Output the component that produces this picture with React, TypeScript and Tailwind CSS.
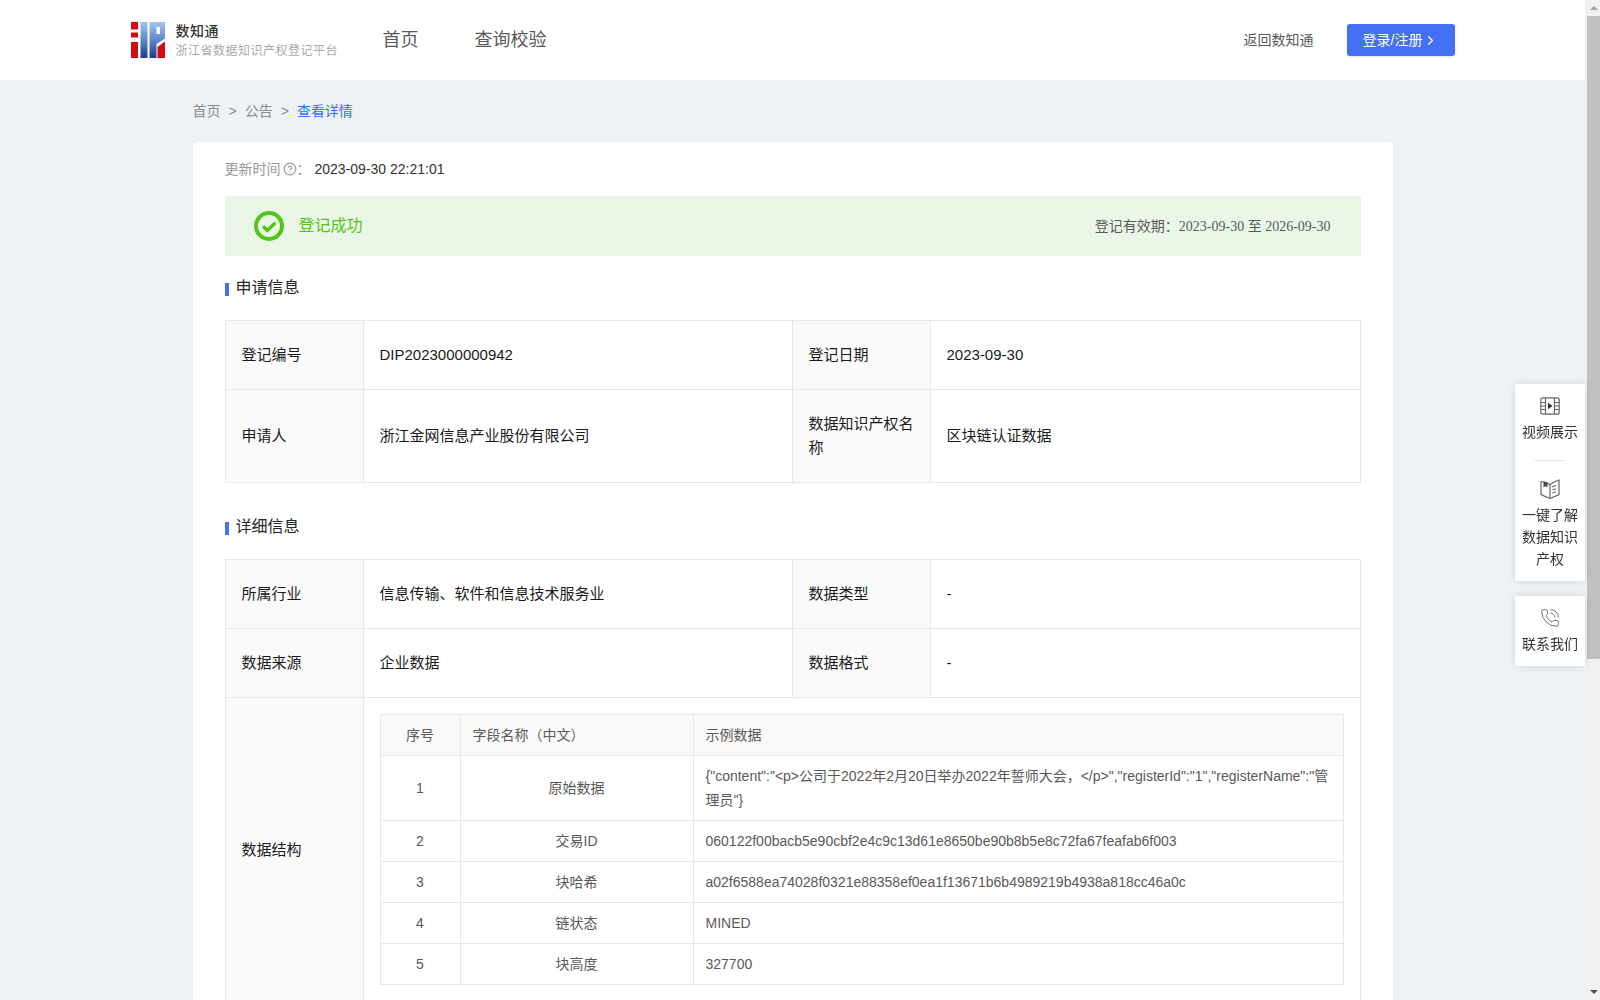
import { ChevronRight, CircleHelp, PhoneCall } from 'lucide-react'

const labelCell = 'border border-[#e8e8e8] bg-[#fafafa] px-4 py-[22px] text-left font-normal align-middle'
const valueCell = 'border border-[#e8e8e8] px-4 py-[22px] text-left align-middle'
const innerHead = 'border border-[#e8e8e8] bg-[#fafafa] px-3 py-2 font-normal'
const innerCell = 'border border-[#e8e8e8] px-3 py-2'

const sampleRows = [
  {
    id: 1,
    name: '原始数据',
    value: '{"content":"<p>公司于2022年2月20日举办2022年誓师大会，</p>","registerId":"1","registerName":"管理员"}',
  },
  { id: 2, name: '交易ID', value: '060122f00bacb5e90cbf2e4c9c13d61e8650be90b8b5e8c72fa67feafab6f003' },
  { id: 3, name: '块哈希', value: 'a02f6588ea74028f0321e88358ef0ea1f13671b6b4989219b4938a818cc46a0c' },
  { id: 4, name: '链状态', value: 'MINED' },
  { id: 5, name: '块高度', value: '327700' },
]

function Logo() {
  return (
    <svg width="34" height="36" viewBox="0 0 34 36" className="shrink-0">
      <defs>
        <linearGradient id="logoBlue" x1="0" y1="0" x2="0" y2="1">
          <stop offset="0" stopColor="#a4c6ec" />
          <stop offset="0.5" stopColor="#5c88c8" />
          <stop offset="1" stopColor="#1f3c8c" />
        </linearGradient>
      </defs>
      <rect x="0" y="0" width="7" height="7.5" fill="#d40c12" />
      <rect x="0" y="10.5" width="7" height="5" fill="#d40c12" />
      <rect x="0" y="20" width="7" height="16" fill="#d40c12" />
      <rect x="9.5" y="0" width="7" height="36" fill="url(#logoBlue)" />
      <path d="M18.5 0H34V16.5L25.5 22V36H18.5Z" fill="url(#logoBlue)" />
      <rect x="25.5" y="5" width="3.5" height="7" fill="#ffffff" />
      <path d="M26.5 25L34 19.5V36H26.5Z" fill="#d40c12" />
    </svg>
  )
}

function VideoIcon() {
  return (
    <svg width="20" height="18" viewBox="0 0 20 18" fill="none" stroke="#666" strokeWidth="1.2">
      <rect x="0.8" y="0.8" width="18.4" height="16.4" rx="2" />
      <path d="M5.5 1V17M14.5 1V17M1 5.5H5.5M1 9H5.5M1 12.5H5.5M14.5 5.5H19M14.5 9H19M14.5 12.5H19" />
      <path d="M8 5.8L12.5 9L8 12.2Z" fill="#333" stroke="none" />
    </svg>
  )
}

function BookIcon() {
  return (
    <svg width="20" height="20" viewBox="0 0 20 20" fill="none" stroke="#666" strokeWidth="1.2">
      <path d="M1 2.5C4 2.5 7 3.5 10 5.5C13 3.5 16 2.2 19 1V15.5L10 19.5L1 15.5Z" />
      <path d="M10 5.5V19" />
      <path d="M3.5 2.8V8.5L5.5 7L7.5 8.5V3.8Z" fill="#444" stroke="none" />
      <path d="M12 8L16 6.5M12.5 11L16 9.8M12.5 14L16 12.8" />
    </svg>
  )
}

function SuccessIcon() {
  return (
    <svg width="30" height="30" viewBox="0 0 30 30" fill="none" className="shrink-0">
      <circle cx="15" cy="15" r="13" stroke="#52c41a" strokeWidth="4" />
      <path d="M9 15.2L13.4 19.4L21.4 11.6" stroke="#52c41a" strokeWidth="3.4" />
    </svg>
  )
}

function SectionTitle({ title, className }: { title: string; className: string }) {
  return (
    <div className={`flex h-6 items-center text-base text-[#262626] ${className}`}>
      <span className="mt-[3px] mr-[7px] h-[13px] w-1 bg-[#4470f4]" />
      {title}
    </div>
  )
}

function SideItem({ icon, lines }: { icon: React.ReactNode; lines: string[] }) {
  return (
    <div className="flex flex-col items-center">
      <div className="flex h-5 items-center">{icon}</div>
      <div className="mt-[5px] text-center text-sm leading-[22px] text-[#333]">
        {lines.map((line) => (
          <div key={line}>{line}</div>
        ))}
      </div>
    </div>
  )
}

function SampleTable() {
  return (
    <table className="w-full table-fixed border-collapse text-sm leading-6 text-[#595959]">
      <colgroup>
        <col className="w-[80px]" />
        <col className="w-[233px]" />
        <col />
      </colgroup>
      <thead>
        <tr>
          <th className={`${innerHead} text-center`}>序号</th>
          <th className={`${innerHead} text-left`}>字段名称（中文）</th>
          <th className={`${innerHead} text-left`}>示例数据</th>
        </tr>
      </thead>
      <tbody>
        {sampleRows.map((row) => (
          <tr key={row.id}>
            <td className={`${innerCell} text-center`}>{row.id}</td>
            <td className={`${innerCell} text-center`}>{row.name}</td>
            <td className={innerCell}>{row.value}</td>
          </tr>
        ))}
      </tbody>
    </table>
  )
}

// 페이지 스크롤바 (스크린샷에 보이는 그대로)
function ScrollBar() {
  return (
    <div className="flex h-full w-[15px] shrink-0 flex-col bg-[#f1f1f1]">
      <div className="flex h-4 items-center justify-center pl-[2px]">
        <svg width="8" height="4" viewBox="0 0 8 4">
          <path d="M4 0L8 4H0Z" fill="#a3a3a3" />
        </svg>
      </div>
      <div className="ml-[2px] h-[643px] bg-[#c1c1c1]" />
      <div className="flex-1" />
      <div className="flex h-4 items-center justify-center pl-[2px]">
        <svg width="8" height="4" viewBox="0 0 8 4">
          <path d="M0 0H8L4 4Z" fill="#505050" />
        </svg>
      </div>
    </div>
  )
}

export default function App() {
  return (
    <div className="flex h-screen overflow-hidden font-['Liberation_Sans','Noto_Sans_CJK_SC',sans-serif]">
      <div className="h-full flex-1 overflow-y-auto bg-[#eef2f5]">
        <header className="h-20 bg-white">
          <div className="mx-auto flex h-full w-[1324px] items-center">
            <Logo />
            <div className="ml-[11px] w-[207px]">
              <div className="text-sm font-medium leading-5 tracking-[0.5px] text-[#333]">数知通</div>
              <div className="mt-[1px] text-xs leading-[18px] tracking-[0.5px] text-[#aaa]">浙江省数据知识产权登记平台</div>
            </div>
            <nav className="flex gap-[56px] text-lg text-[#595959]">
              <span>首页</span>
              <span>查询校验</span>
            </nav>
            <span className="ml-auto text-sm text-[#595959]">返回数知通</span>
            <button className="ml-[33px] flex h-8 w-[108px] items-center rounded-[3px] bg-[#4470f4] pl-4 text-sm text-white shadow-sm">
              登录/注册
              <ChevronRight size={15} className="ml-[1px]" />
            </button>
          </div>
        </header>

        <main className="mx-auto w-[1200px] pb-[505px]">
          <div className="flex h-[62px] items-center text-sm text-[#8c8c8c]">
            <span>首页</span>
            <span className="mx-2">&gt;</span>
            <span>公告</span>
            <span className="mx-2">&gt;</span>
            <span className="text-[#3370ff]">查看详情</span>
          </div>

          <section className="rounded bg-white px-8 pt-4 pb-10">
            <div className="flex h-[22px] items-center text-sm">
              <span className="text-[#999]">更新时间</span>
              <CircleHelp size={14} className="ml-[2px] text-[#999]" />
              <span className="w-[18px] text-[#999]">：</span>
              <span className="text-[#333]">2023-09-30 22:21:01</span>
            </div>

            <div className="mt-[16px] flex h-[60px] items-center bg-[#ebf7e6] pr-[30px] pl-[29px]">
              <SuccessIcon />
              <span className="ml-[15px] text-base text-[#52c41a]">登记成功</span>
              <span className="ml-auto text-sm text-[#595959]">
                登记有效期：
                <span className="font-['Liberation_Serif','Noto_Sans_CJK_SC',serif]">2023-09-30 至 2026-09-30</span>
              </span>
            </div>

            <SectionTitle title="申请信息" className="mt-5 mb-5" />
            <table className="w-full table-fixed border-collapse text-[15px] leading-6 text-[#1a1a1a]">
              <colgroup>
                <col className="w-[138px]" />
                <col className="w-[429px]" />
                <col className="w-[138px]" />
                <col />
              </colgroup>
              <tbody>
                <tr>
                  <th className={labelCell}>登记编号</th>
                  <td className={valueCell}>DIP2023000000942</td>
                  <th className={labelCell}>登记日期</th>
                  <td className={valueCell}>2023-09-30</td>
                </tr>
                <tr>
                  <th className={labelCell}>申请人</th>
                  <td className={valueCell}>浙江金网信息产业股份有限公司</td>
                  <th className={labelCell}>数据知识产权名称</th>
                  <td className={valueCell}>区块链认证数据</td>
                </tr>
              </tbody>
            </table>

            <SectionTitle title="详细信息" className="mt-[32px] mb-[20px]" />
            <table className="w-full table-fixed border-collapse text-[15px] leading-6 text-[#1a1a1a]">
              <colgroup>
                <col className="w-[138px]" />
                <col className="w-[429px]" />
                <col className="w-[138px]" />
                <col />
              </colgroup>
              <tbody>
                <tr>
                  <th className={labelCell}>所属行业</th>
                  <td className={valueCell}>信息传输、软件和信息技术服务业</td>
                  <th className={labelCell}>数据类型</th>
                  <td className={valueCell}>-</td>
                </tr>
                <tr>
                  <th className={labelCell}>数据来源</th>
                  <td className={valueCell}>企业数据</td>
                  <th className={labelCell}>数据格式</th>
                  <td className={valueCell}>-</td>
                </tr>
                <tr>
                  <th className={labelCell}>数据结构</th>
                  <td colSpan={3} className="border border-[#e8e8e8] p-4">
                    <SampleTable />
                  </td>
                </tr>
              </tbody>
            </table>
          </section>
        </main>
      </div>

      <ScrollBar />

      {/* 오른쪽 플로팅 메뉴 */}
      <aside className="fixed top-[384px] right-[15px] flex w-[70px] flex-col gap-[15px]">
        <div className="flex h-[197px] flex-col items-center bg-white pt-3 shadow-[0_0_8px_rgba(0,0,0,0.12)]">
          <SideItem icon={<VideoIcon />} lines={['视频展示']} />
          <div className="mt-[17px] mb-[18px] h-px w-8 shrink-0 bg-[#e8e8e8]" />
          <SideItem icon={<BookIcon />} lines={['一键了解', '数据知识', '产权']} />
        </div>
        <div className="flex h-[70px] flex-col items-center bg-white pt-3 shadow-[0_0_8px_rgba(0,0,0,0.12)]">
          <SideItem icon={<PhoneCall size={20} strokeWidth={1.1} className="text-[#666]" />} lines={['联系我们']} />
        </div>
      </aside>
    </div>
  )
}
